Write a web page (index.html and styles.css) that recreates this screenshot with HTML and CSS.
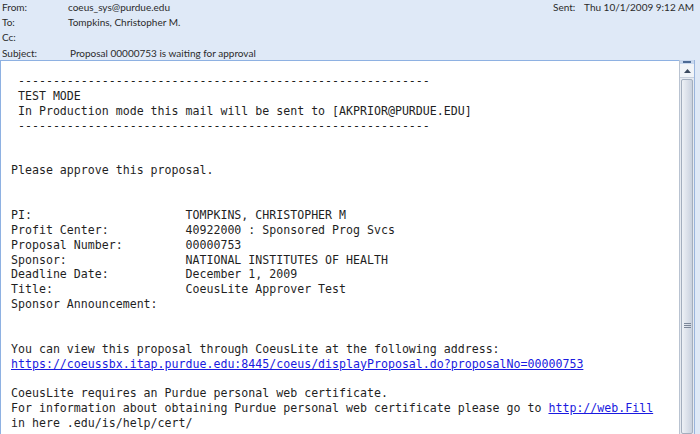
FILE: index.html
```html
<!DOCTYPE html>
<html lang="en">
<head>
    <meta charset="UTF-8">
    <title>Proposal 00000753 is waiting for approval</title>
    <link rel="stylesheet" href="styles.css">
</head>
<body>

<div class="window">
    <div class="header">
        <div class="fields">
            <div class="row"><span class="label">From:</span><span class="value">coeus_sys@purdue.edu</span></div>
            <div class="row"><span class="label">To:</span><span class="value">Tompkins, Christopher M.</span></div>
            <div class="row"><span class="label">Cc:</span><span class="value"></span></div>
            <div class="row"><span class="label">Subject:</span><span class="value subject">Proposal 00000753 is waiting for approval</span></div>
        </div>
        <div class="sent">
            <span class="sent-label">Sent:</span><span>Thu 10/1/2009 9:12 AM</span>
        </div>
    </div>

    <div class="reading">
        <div class="message">
<pre class="text"> -----------------------------------------------------------
 TEST MODE
 In Production mode this mail will be sent to [AKPRIOR@PURDUE.EDU]
 -----------------------------------------------------------


Please approve this proposal.


PI:                      TOMPKINS, CHRISTOPHER M
Profit Center:           40922000 : Sponsored Prog Svcs
Proposal Number:         00000753
Sponsor:                 NATIONAL INSTITUTES OF HEALTH
Deadline Date:           December 1, 2009
Title:                   CoeusLite Approver Test
Sponsor Announcement:


You can view this proposal through CoeusLite at the following address:
<a href="#">https://coeussbx.itap.purdue.edu:8445/coeus/displayProposal.do?proposalNo=00000753</a>

CoeusLite requires an Purdue personal web certificate.
For information about obtaining Purdue personal web certificate please go to <a href="#">http://web.Fill</a>
in here .edu/is/help/cert/</pre>
        </div>
        <div class="scrollbar">
            <div class="split"><span></span></div>
            <div class="arrow">
                <svg width="7" height="4" viewBox="0 0 7 4"><path d="M0 4 L3.5 0 L7 4 Z" fill="#3c4a5e"/></svg>
            </div>
            <div class="thumb">
                <div class="grip"><span></span><span></span><span></span></div>
            </div>
        </div>
        <div class="edge"></div>
    </div>
</div>

</body>
</html>
```

FILE: styles.css
```css
body {
    margin: 0;
    background: #dfe9f7;
}
.window {
    width: 700px;
    height: 434px;
    display: flex;
    flex-direction: column;
    overflow: hidden;
}
.header {
    height: 60px;
    display: flex;
    justify-content: space-between;
    background: #dfe9f7;
    font-family: "Lato", "Open Sans", sans-serif;
    font-size: 10px;
    color: #2b2b2b;
}
.row {
    display: flex;
    height: 15.2px;
    line-height: 15px;
}
.label {
    width: 66px;
    padding-left: 2px;
}
.subject {
    padding-left: 2px;
}
.sent {
    padding-right: 6px;
    line-height: 15px;
}
.sent-label {
    display: inline-block;
    width: 31px;
}
.reading {
    flex: 1;
    display: flex;
    min-height: 0;
}
.message {
    flex: 1;
    background: #fff;
    border-top: 1px solid #8eb1e2;
    border-left: 1px solid #8eb1e2;
    padding: 13px 0 0 10px;
    overflow: hidden;
}
.text {
    margin: 0;
    font-family: "DejaVu Sans Mono", monospace;
    font-size: 11.6px;
    line-height: 14.87px;
    color: #1f1f1f;
}
.text a {
    color: #1a1ae0;
    text-decoration: underline;
}
.scrollbar {
    width: 14px;
    display: flex;
    flex-direction: column;
    background: #e7ebf1;
    border-left: 1px solid #b9c3d1;
}
.split {
    height: 4px;
    background: #c9d8ee;
    display: flex;
    justify-content: center;
    align-items: center;
}
.split span {
    width: 8px;
    height: 2px;
    background: #4d6a94;
}
.arrow {
    height: 13px;
    display: flex;
    justify-content: center;
    align-items: center;
    background: #f1f4f8;
    border-bottom: 1px solid #c8d0dc;
}
.thumb {
    flex: 1;
    margin: 1px 1px 0 1px;
    border: 1px solid #a3aebe;
    border-radius: 2px;
    background: linear-gradient(to right, #eef1f6, #d8dee8 60%, #c9d1de);
    display: flex;
    flex-direction: column;
    align-items: center;
    padding-top: 243px;
}
.grip {
    display: flex;
    flex-direction: column;
    gap: 1px;
}
.grip span {
    width: 7px;
    height: 1px;
    background: #7b8698;
}
.edge {
    width: 5px;
    background: #dfe9f7;
    border-left: 1px solid #9ab5dd;
}
```
